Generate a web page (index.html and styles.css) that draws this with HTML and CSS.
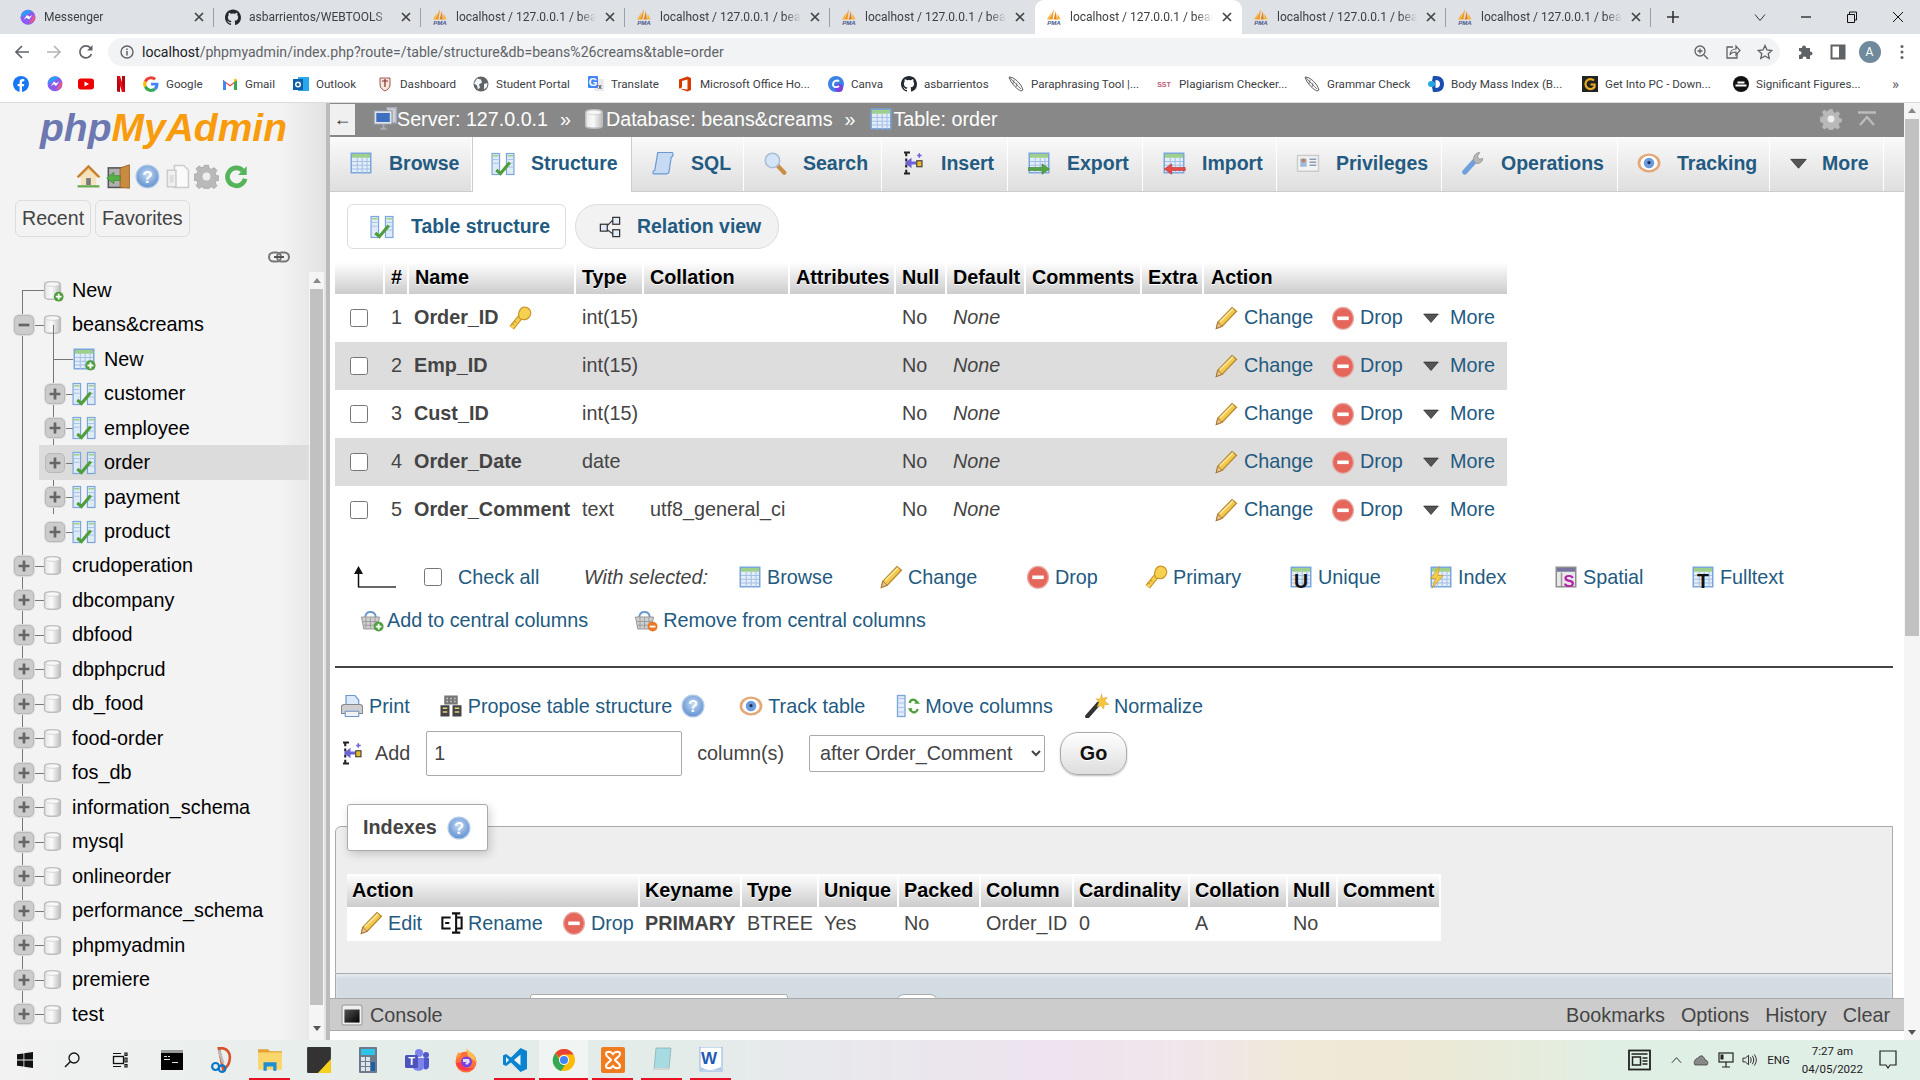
FILE: index.html
```html
<!DOCTYPE html>
<html lang="en">
<head>
<meta charset="utf-8">
<title>localhost / 127.0.0.1 / beans&amp;creams / order | phpMyAdmin</title>
<link rel="stylesheet" href="styles.css">
</head>
<body>
<svg class="sprite" xmlns="http://www.w3.org/2000/svg" width="0" height="0">
<defs>
<linearGradient id="gdb" x1="0" x2="1" y1="0" y2="0"><stop offset="0" stop-color="#e6e6e6"/><stop offset=".45" stop-color="#fafafa"/><stop offset="1" stop-color="#bdbdbd"/></linearGradient>
<linearGradient id="gcon" x1="0" x2="1" y1="0" y2="1"><stop offset="0" stop-color="#555"/><stop offset="1" stop-color="#000"/></linearGradient>
<radialGradient id="ghelp" cx=".5" cy=".4" r=".6"><stop offset="0" stop-color="#c5d9f3"/><stop offset="1" stop-color="#5d90d0"/></radialGradient>
<symbol id="db" viewBox="0 0 16 16"><path d="M2.500 3.500C2.500 1.300 13.500 1.300 13.500 3.500V12.500C13.500 14.700 2.500 14.700 2.500 12.500Z" fill="url(#gdb)" stroke="#bdbdbd"/><ellipse cx="8" cy="3.600" rx="4.800" ry="1.500" fill="#f7f7f7" stroke="#ccc" stroke-width=".5"/></symbol>
<symbol id="dbnew" viewBox="0 0 16 16"><use href="#db"/><circle cx="12.300" cy="12.300" r="3.400" fill="#4f9e3d"/><path d="M10.300 12.300h4M12.300 10.300v4" stroke="#fff" stroke-width="1.300"/></symbol>
<symbol id="tbl" viewBox="0 0 16 16"><rect x="1.500" y="1.500" width="13" height="13" fill="#e3edf9" stroke="#7ba6dc"/><rect x="2" y="2" width="12" height="2.500" fill="#9ed08c"/><path d="M2 7h12M2 9.500h12M2 12h12M5.500 4.500v10M8.800 4.500v10M12 4.500v10" stroke="#a5c0e4" stroke-width=".7"/></symbol>
<symbol id="tblnew" viewBox="0 0 16 16"><use href="#tbl"/><circle cx="12.300" cy="12.300" r="3.400" fill="#4f9e3d"/><path d="M10.300 12.300h4M12.300 10.300v4" stroke="#fff" stroke-width="1.300"/></symbol>
<symbol id="struct" viewBox="0 0 16 16"><rect x=".7" y="1" width="5" height="14" fill="#dfeaf7" stroke="#7ba6dc" stroke-width=".8"/><rect x="10.300" y="1" width="5" height="14" fill="#dfeaf7" stroke="#7ba6dc" stroke-width=".8"/><path d="M1 2.500h4M11 2.500h4" stroke="#9ed08c"/><path d="M1 5h4M1 7.500h4M11 5h4M11 7.500h4M11 10h4" stroke="#a5c0e4" stroke-width=".6"/><path d="M3.500 12L6.300 14.300 12.500 7" fill="none" stroke="#4f9e3d" stroke-width="2.100"/></symbol>
<symbol id="server" viewBox="0 0 16 16"><path d="M9 .5h6.500v10H13" fill="#cfd3d8" stroke="#aab"/><rect x=".7" y="2.500" width="12" height="9" fill="#dfe3e8" stroke="#8a93a0" stroke-width=".7"/><rect x="2.200" y="4" width="9" height="6" fill="#3f6fc0"/><path d="M5 14.500h4M7 11.500v3" stroke="#aab" stroke-width="1.300"/></symbol>
<symbol id="relv" viewBox="0 0 16 16"><rect x="10" y="1" width="5" height="5" fill="#e3edf9" stroke="#333" stroke-width=".9"/><rect x="10" y="10" width="5" height="5" fill="#e3edf9" stroke="#333" stroke-width=".9"/><rect x="1" y="6" width="5" height="5" fill="#e3edf9" stroke="#333" stroke-width=".9"/><path d="M6 7L10 3M6 10l4 3" stroke="#333" stroke-width=".9"/></symbol>
<symbol id="sql" viewBox="0 0 16 16"><path d="M4.500 1H14c1 0 1 3-.5 3L12 14c-.2 1-1 1.300-2 1.300H2C1 15.300 1 13 2.500 13Z" fill="#c6daf3" stroke="#6b98d0" stroke-width=".8"/></symbol>
<symbol id="search" viewBox="0 0 16 16"><path d="M9.800 9.800L14.200 14.500" stroke="#c98f45" stroke-width="2.800" stroke-linecap="round"/><circle cx="6.300" cy="6.300" r="4.800" fill="#d4e5f8" stroke="#a9bdd3"/></symbol>
<symbol id="insert" viewBox="0 0 16 16"><path d="M2 1h4M2 15h4M3.500 1v2.500M3.500 5v2M3.500 9v2M3.500 12.500v2.500" stroke="#222" stroke-width="1.400"/><path d="M2.500 8L7 4.500V7h3v2H7v2.500Z" fill="#6a62d6"/><rect x="10.500" y="6.500" width="3.500" height="4" fill="#e8b92c" stroke="#333" stroke-width=".7"/><path d="M12.200 1.500v3M10.800 3h3" stroke="#6a62d6"/></symbol>
<symbol id="export" viewBox="0 0 16 16"><use href="#tbl"/><path d="M1 11h9V8.500l5 3.500-5 3.500V13H1Z" fill="#55a545" stroke="#3e7f33" stroke-width=".4"/></symbol>
<symbol id="import" viewBox="0 0 16 16"><use href="#tbl"/><path d="M15.500 11h-9V8.500l-5 3.500 5 3.500V13h9Z" fill="#e84a4a" stroke="#b73030" stroke-width=".4"/></symbol>
<symbol id="priv" viewBox="0 0 16 16"><rect x="1" y="3" width="14" height="10.500" fill="#f3f3f3" stroke="#ccc"/><rect x="2.800" y="5" width="4.300" height="5.500" fill="#9db9dd"/><circle cx="5" cy="6.300" r="1.300" fill="#c57f4c"/><path d="M9 5.500h4.500M9 7.500h4.500M9 9.500h4.500" stroke="#8b9cb5"/></symbol>
<symbol id="oper" viewBox="0 0 16 16"><path d="M2.500 14L9 6.800" stroke="#6f9fdd" stroke-width="3.400" stroke-linecap="round"/><path d="M8.500 6.500C7.800 3.500 9.800 1 12.500 1L11 3.500 12 5.500 14.500 5C14.500 7.500 11.500 9 9.500 8Z" fill="#b6b6b6" stroke="#8c8c8c" stroke-width=".5"/></symbol>
<symbol id="eye" viewBox="0 0 16 16"><ellipse cx="8" cy="8" rx="7.600" ry="6.400" fill="#e4a877"/><ellipse cx="8" cy="8" rx="5.800" ry="4.800" fill="#fff"/><circle cx="8" cy="8" r="3.500" fill="#6b9bdc"/><circle cx="8" cy="7.700" r="1.100" fill="#1e2f55"/></symbol>
<symbol id="tri" viewBox="0 0 16 16"><path d="M1.500 4.500h13L8 12Z" fill="#555" stroke="#222" stroke-width=".6"/></symbol>
<symbol id="pencil" viewBox="0 0 16 16"><path d="M12 1l3 2.500-9.500 10L1.500 15l1-4.200Z" fill="#f2c94c" stroke="#b9862a" stroke-width=".8"/><path d="M2.500 10.800l3 2.700L1.500 15Z" fill="#e6bf94" stroke="#9a6c2a" stroke-width=".5"/><path d="M4 10.500l8.700-8.700" stroke="#fbe9a3"/></symbol>
<symbol id="drop" viewBox="0 0 16 16"><ellipse cx="8" cy="8.200" rx="7" ry="7.300" fill="#e5675c" stroke="#e8aaa5" stroke-width=".8"/><rect x="4.200" y="7" width="7.600" height="2.400" fill="#fff"/></symbol>
<symbol id="key" viewBox="0 0 16 16"><path d="M2.500 14.500L8.500 7" stroke="#c9972d" stroke-width="3.800"/><path d="M2.500 14.500L8.500 7" stroke="#f6d04f" stroke-width="2.300"/><path d="M2.500 11.500l1.500 1M4 10l1.500 1" stroke="#c9972d"/><path d="M10.500 .8C13.200 .5 15.800 2.700 15 5.700 14 9 10.500 10 7.800 8.300 6 5.500 7.800 1.300 10.500 .8Z" fill="#f6d04f" stroke="#c9972d" stroke-width=".8"/></symbol>
<symbol id="uniq" viewBox="0 0 16 16"><use href="#tbl"/><text x="8" y="15" text-anchor="middle" class="svgt" font-size="13">U</text></symbol>
<symbol id="idx" viewBox="0 0 16 16"><use href="#tbl"/><path d="M7 1L1 9h3.500L2 15.500 9.500 7H6Z" fill="#f3cd4a" stroke="#c7982b" stroke-width=".5"/></symbol>
<symbol id="spat" viewBox="0 0 16 16"><rect x="1.500" y="1.500" width="13" height="13" fill="#e9e9e9" stroke="#8d8d8d"/><rect x="2" y="2" width="12" height="2.500" fill="#77759c"/><path d="M5 5v9" stroke="#999"/><text x="10" y="14.500" text-anchor="middle" class="svgs" font-size="11">S</text></symbol>
<symbol id="full" viewBox="0 0 16 16"><use href="#tbl"/><text x="8" y="15" text-anchor="middle" class="svgt" font-size="13">T</text></symbol>
<symbol id="cadd" viewBox="0 0 16 16"><path d="M3.500 6C4 1.500 10 1.500 10.500 6" fill="none" stroke="#6d98cc" stroke-width="1.300"/><path d="M1 6h12l-1.500 8h-9Z" fill="#cfcfcf" stroke="#8f8f8f" stroke-width=".6"/><path d="M4 6.500v7M7 6.500v7M10 6.500v7M2 9h10M2.500 11.500h9" stroke="#8f8f8f" stroke-width=".5"/><circle cx="12.400" cy="12.400" r="3.300" fill="#4f9e3d"/><path d="M10.500 12.400h3.800M12.400 10.500v3.800" stroke="#fff" stroke-width="1.200"/></symbol>
<symbol id="crem" viewBox="0 0 16 16"><path d="M3.500 6C4 1.500 10 1.500 10.500 6" fill="none" stroke="#6d98cc" stroke-width="1.300"/><path d="M1 6h12l-1.500 8h-9Z" fill="#cfcfcf" stroke="#8f8f8f" stroke-width=".6"/><path d="M4 6.500v7M7 6.500v7M10 6.500v7M2 9h10M2.500 11.500h9" stroke="#8f8f8f" stroke-width=".5"/><circle cx="12.400" cy="12.400" r="3.300" fill="#e8792b"/><path d="M10.500 12.400h3.800" stroke="#fff" stroke-width="1.200"/></symbol>
<symbol id="print" viewBox="0 0 16 16"><path d="M4 1h6l2.500 3v4h-8.500Z" fill="#dce9f8" stroke="#6d98cc" stroke-width=".8"/><path d="M1 8.500C1 7.500 2 7 3 7h10c1 0 2 .5 2 1.500V13H1Z" fill="#cfcfcf" stroke="#888" stroke-width=".7"/><rect x="3.500" y="11.500" width="9" height="3.500" fill="#f2f2f2" stroke="#6d98cc" stroke-width=".7"/></symbol>
<symbol id="prop" viewBox="0 0 16 16"><rect x="3.500" y="1" width="9" height="6" fill="#777"/><path d="M5 3h1M7.500 3h1M10 3h1M5 5h1M7.500 5h1M10 5h1" stroke="#ccc"/><rect x="1" y="7.500" width="6" height="7.500" fill="#444"/><rect x="9" y="7.500" width="6" height="7.500" fill="#444"/><path d="M2.500 9.500h3M2.500 12h3M10.500 9.500h3M10.500 12h3" stroke="#e6d27a"/></symbol>
<symbol id="help" viewBox="0 0 16 16"><circle cx="8" cy="8" r="7.300" fill="url(#ghelp)" stroke="#b4cbe8" stroke-width=".8"/><text x="8" y="12" text-anchor="middle" class="svgw" font-size="11">?</text></symbol>
<symbol id="move" viewBox="0 0 16 16"><rect x="1" y="1" width="5" height="14" fill="#e3edf9" stroke="#7ba6dc" stroke-width=".9"/><path d="M1.500 3h4M1.500 6h4M1.500 9h4M1.500 12h4" stroke="#a5c0e4" stroke-width=".6"/><path d="M9 6C10 3 13 3 14 6M14.500 10c-1 3-4 3-5 0" fill="none" stroke="#4f9e3d" stroke-width="1.500"/><path d="M12 6.500h4L14.500 4.500ZM8 9.500h3L9.500 12Z" fill="#4f9e3d"/></symbol>
<symbol id="wand" viewBox="0 0 16 16"><path d="M1.500 15L9 6.500" stroke="#333" stroke-width="2.800" stroke-linecap="round"/><path d="M11 0l.8 3 3-1-1.600 2.800L16 7l-3.200.2L12.500 10l-1.800-2.200L8 8.500l1.300-2.800L7.500 3.200l2.700.2Z" fill="#f5c73d" stroke="#d49a1e" stroke-width=".3"/></symbol>
<symbol id="rename" viewBox="0 0 16 16"><path d="M7 4H1v8h6" fill="#fff" stroke="#111" stroke-width="1.500"/><path d="M3 8h3" stroke="#111" stroke-width="1.500"/><path d="M8 1h6M8 15h6M11 1v14M11 4h4v8h-4" fill="none" stroke="#111" stroke-width="1.500"/></symbol>
<symbol id="console" viewBox="0 0 16 16"><rect x=".7" y=".7" width="14.600" height="14.600" rx="1.500" fill="#efefef" stroke="#aaa"/><rect x="2.500" y="4" width="11" height="9.500" fill="url(#gcon)"/></symbol>
<symbol id="home" viewBox="0 0 16 16"><path d="M1 8.500L8 1.500l7 7" fill="#f1c27a" stroke="#c47e2f" stroke-width="1.400"/><path d="M3 8l5-4.500L13 8v5.500H3Z" fill="#f5e2bf"/><rect x="6.500" y="9" width="3" height="4.500" fill="#7a7a7a"/><path d="M1 14.300h14" stroke="#66a84a" stroke-width="1.400"/></symbol>
<symbol id="exit" viewBox="0 0 16 16"><rect x="1.500" y="2.500" width="9" height="12.500" fill="#b0b0b0" stroke="#555"/><path d="M9 2.500L15 .5V15.500L9 15Z" fill="#c98a42" stroke="#91591e" stroke-width=".5"/><path d="M.5 9L5 5.300V7.500H9v3H5v2.200Z" fill="#56b044" stroke="#367d2a" stroke-width=".4"/></symbol>
<symbol id="doc" viewBox="0 0 16 16"><path d="M6 1h6l3 3v11H6Z" fill="#fafafa" stroke="#ccc"/><path d="M1.500 4H7v10.500H1.500Z" fill="#f1f1f1" stroke="#ccc"/><path d="M3 7h2.500v5H3Z" fill="#ddd"/></symbol>
<symbol id="gear" viewBox="0 0 16 16"><path d="M6.700 .8h2.600l.4 2 1.400.6 1.800-1.100 1.800 1.800-1.100 1.800.6 1.400 2 .4v2.600l-2 .4-.6 1.400 1.100 1.800-1.800 1.800-1.800-1.100-1.400.6-.4 2H6.700l-.4-2-1.400-.6-1.800 1.100-1.800-1.800 1.100-1.800-.6-1.400-2-.4V6.600l2-.4.6-1.400L1.300 3l1.800-1.800 1.800 1.100 1.400-.6Z" fill="#b9b9b9" stroke="#9a9a9a" stroke-width=".4"/><circle cx="8" cy="8" r="2.500" fill="#eee"/></symbol>
<symbol id="reload" viewBox="0 0 16 16"><path d="M13.500 9.500A5.700 5.700 0 1 1 12 4.200" fill="none" stroke="#55b45a" stroke-width="3"/><path d="M14.500 1.500V7H9Z" fill="#55b45a"/></symbol>
<symbol id="link" viewBox="0 0 22 12"><rect x="1" y="1.500" width="12" height="9" rx="4.500" fill="none" stroke="#777" stroke-width="2"/><rect x="9" y="1.500" width="12" height="9" rx="4.500" fill="none" stroke="#777" stroke-width="2"/><path d="M6 6h10" stroke="#555" stroke-width="2"/></symbol>
<symbol id="plus" viewBox="0 0 20 20"><path d="M4 10h12M10 4v12" stroke="#666" stroke-width="3"/></symbol>
<symbol id="minus" viewBox="0 0 20 20"><path d="M4 10h12" stroke="#666" stroke-width="3"/></symbol>
<symbol id="selarrow" viewBox="0 0 42 24"><path d="M4 22h38" stroke="#333" stroke-width="1.500"/><path d="M4.500 22V7" stroke="#111" stroke-width="1.500"/><path d="M0 9L4.500 1 9 9Z" fill="#111"/></symbol>
<symbol id="pma" viewBox="0 0 16 18"><path d="M3 11L8 0 6.500 11Z" fill="#f29a1c"/><path d="M7.500 11L10 2 11 11Z" fill="#e5831a"/><path d="M.5 11L5 4 3.500 11ZM11 11L12 5 15 11Z" fill="#f6b445"/><text x="8" y="17" text-anchor="middle" class="svgp" font-size="6.500">PMA</text></symbol>
<symbol id="gh" viewBox="0 0 16 16"><path fill="#24292f" d="M8 0C3.580 0 0 3.580 0 8c0 3.540 2.290 6.530 5.470 7.590.4.070.55-.17.55-.38v-1.340c-2.230.48-2.700-1.070-2.700-1.070-.36-.92-.89-1.170-.89-1.170-.73-.5.050-.49.050-.49.800.06 1.220.82 1.220.82.720 1.220 1.870.87 2.330.66.070-.52.280-.87.510-1.070-1.780-.2-3.640-.89-3.640-3.950 0-.87.310-1.590.820-2.150-.08-.2-.36-1.020.08-2.120 0 0 .67-.21 2.200.82a7.600 7.600 0 0 1 4 0c1.530-1.040 2.200-.82 2.200-.82.440 1.100.16 1.920.08 2.120.51.560.82 1.270.82 2.150 0 3.070-1.870 3.750-3.650 3.950.290.250.540.730.540 1.480v2.190c0 .210.150.460.550.380A8 8 0 0 0 16 8c0-4.420-3.580-8-8-8Z"/></symbol>
<symbol id="msg" viewBox="0 0 16 16"><circle cx="8" cy="7.700" r="7.500" fill="#8a5cf0"/><path d="M1 8A7.400 7.400 0 0 1 8 .4c2 0 3 .6 4 1.500Z" fill="#2a9df4"/><path d="M9 14a7 7 0 0 0 6-6l-1-3Z" fill="#f0567f"/><path d="M3.700 10L7 5.500l2.300 1.800L12.300 5.500 9 10 6.700 8.200Z" fill="#fff"/></symbol>
<symbol id="x" viewBox="0 0 12 12"><path d="M2 2l8 8M10 2l-8 8" stroke="#444" stroke-width="1.700"/></symbol>
<symbol id="fb" viewBox="0 0 16 16"><circle cx="8" cy="8" r="8" fill="#1877f2"/><path d="M10.900 10.300l.4-2.300H9V6.500c0-.7.300-1.300 1.300-1.300h1V3.200S10.400 3 9.600 3C7.800 3 6.600 4.100 6.600 6.100V8H4.600v2.300h2V16h2.400v-5.700Z" fill="#fff"/></symbol>
<symbol id="yt" viewBox="0 0 16 16"><rect x="0" y="2.500" width="16" height="11" rx="3" fill="#e00"/><path d="M6.500 5.500L11 8l-4.500 2.500Z" fill="#fff"/></symbol>
<symbol id="nf" viewBox="0 0 10 16"><path d="M1 0h3v16L1 15.500ZM6 0h3v16L6 15.500Z" fill="#b20710"/><path d="M1 0h3l5 16H6Z" fill="#e50914"/></symbol>
<symbol id="goog" viewBox="0 0 16 16"><path d="M15.500 8.200c0-.6 0-1-.1-1.500H8v2.900h4.300c-.2 1-.7 1.800-1.600 2.400l2.500 2c1.500-1.300 2.300-3.400 2.300-5.800Z" fill="#4285f4"/><path d="M8 16c2.100 0 3.900-.7 5.200-1.900l-2.500-2c-.7.500-1.600.8-2.700.8-2.100 0-3.800-1.400-4.400-3.300L1 11.600C2.300 14.200 5 16 8 16Z" fill="#34a853"/><path d="M3.600 9.600a4.800 4.800 0 0 1 0-3.200L1 4.400a8 8 0 0 0 0 7.200Z" fill="#fbbc05"/><path d="M8 3.200c1.200 0 2.200.4 3 1.200l2.200-2.200A8 8 0 0 0 1 4.400l2.600 2C4.200 4.500 5.900 3.200 8 3.200Z" fill="#ea4335"/></symbol>
<symbol id="gm" viewBox="0 0 16 16"><path d="M1 14V4l7 5 7-5v10h-3V7.500L8 10.500 4 7.500V14Z" fill="#ea4335"/><path d="M1 14V4l3 2.300V14Z" fill="#4285f4"/><path d="M12 14V6.300L15 4v10Z" fill="#34a853"/><path d="M12 6.300L15 4l-1.500-1.500L12 3.500Z" fill="#fbbc05"/></symbol>
<symbol id="ol" viewBox="0 0 16 16"><rect x="5" y="1" width="11" height="14" fill="#28a8ea"/><rect x="0" y="3" width="10" height="11" fill="#0f5ea8"/><circle cx="5" cy="8.500" r="2.300" fill="none" stroke="#fff" stroke-width="1.400"/></symbol>
<symbol id="crest" viewBox="0 0 16 16"><path d="M3 2h10v7c0 3-3 5-5 6-2-1-5-3-5-6Z" fill="#f3e9dc" stroke="#8a2c2c" stroke-width=".8"/><path d="M5 5h6M8 3v8" stroke="#8a2c2c" stroke-width="1.200"/></symbol>
<symbol id="globe" viewBox="0 0 16 16"><circle cx="8" cy="8" r="7.500" fill="#5f6368"/><path d="M4 2.500l4 1 1 3-3 2 1 3-2 2-1-4-3-2ZM11 8l3.500-1-.5 4-3 2.500Z" fill="#f1f3f4"/></symbol>
<symbol id="gt" viewBox="0 0 16 16"><rect x="6" y="3" width="10" height="12" rx="1" fill="#e8eaed"/><rect x="0" y="0" width="10" height="12" rx="1" fill="#4285f4"/><text x="5" y="9.500" text-anchor="middle" class="svgw" font-size="9">G</text><text x="12" y="13" text-anchor="middle" class="svgd" font-size="7">x</text></symbol>
<symbol id="off" viewBox="0 0 16 16"><path d="M2 3.500L10.500.5l3.500 1.500v12l-3.500 1.500L2 12.500l8.500 1V3.500L5 5v6.500L2 12.500Z" fill="#d83b01"/></symbol>
<symbol id="canva" viewBox="0 0 16 16"><circle cx="8" cy="8" r="8" fill="#3b82e6"/><circle cx="11" cy="12" r="4" fill="#7d3fe0"/><path d="M11 5.500C9.500 3.500 5 5 5 8.500c0 3 4 3.500 6 1.500" fill="none" stroke="#fff" stroke-width="1.800"/></symbol>
<symbol id="quill" viewBox="0 0 16 16"><path d="M1 1c5 0 12 6 14 13l-2 1C10 14 3 8 1 1Z" fill="#f4f4f4" stroke="#555" stroke-width=".9"/><path d="M2 2l11 11M6 4L5 8M9 7l-1 4" stroke="#555" stroke-width=".7"/></symbol>
<symbol id="sst" viewBox="0 0 16 16"><text x="8" y="11" text-anchor="middle" class="svgr" font-size="7">SST</text></symbol>
<symbol id="dd" viewBox="0 0 16 16"><path d="M5 0h3c5 0 8 3 8 8s-3 8-8 8H5l-1-5 3-3-3-3Z" fill="#1a4fb0"/><path d="M7.500 4c3 0 4.500 1.500 4.500 4s-1.500 4-4.500 4Z" fill="#fff"/><ellipse cx="3.500" cy="8" rx="3.500" ry="3" fill="#22a7e0"/></symbol>
<symbol id="gy" viewBox="0 0 16 16"><rect width="16" height="16" fill="#222"/><path d="M12 4.500A5 5 0 1 0 12.500 11V8.500h-4" fill="none" stroke="#e6ab23" stroke-width="2.200"/></symbol>
<symbol id="sig" viewBox="0 0 16 16"><circle cx="8" cy="8" r="8" fill="#111"/><path d="M4.500 6.500h7M2.500 9.500h11" stroke="#fff" stroke-width="2"/></symbol>
<symbol id="win" viewBox="0 0 16 16"><path d="M0 2.300l6.500-.9v6.200H0ZM7.300 1.300L16 0v7.600H7.300ZM0 8.400h6.500v6.200L0 13.700ZM7.300 8.400H16V16L7.300 14.800Z" fill="#111"/></symbol>
<symbol id="mag" viewBox="0 0 16 16"><circle cx="10" cy="6" r="5" fill="none" stroke="#111" stroke-width="1.300"/><path d="M6.500 9.500L1 15" stroke="#111" stroke-width="1.500"/></symbol>
<symbol id="tv" viewBox="0 0 16 16"><rect x="1.500" y="4.500" width="10" height="7" fill="none" stroke="#111" stroke-width="1.300"/><path d="M1 1.500h8M1 14.500h8M13 1h2v2.500h-2ZM13 6h2v4h-2ZM13 12.500h2V15h-2Z" fill="none" stroke="#111" stroke-width="1.200"/></symbol>
<symbol id="cmd" viewBox="0 0 22 20"><rect width="22" height="20" fill="#000"/><rect width="22" height="3" fill="#999"/><path d="M3 6h3v1H3ZM7 6h2v1H7ZM3 9h6v1H3ZM11 12h6v1h-6Z" fill="#ddd"/></symbol>
<symbol id="snip" viewBox="0 0 20 24"><path d="M10 1c6 0 9 5 8 11s-6 9-6 9L8 1Z" fill="none" stroke="#d4532b" stroke-width="2.400"/><path d="M8 3l4 12" stroke="#bbb" stroke-width="2.400"/><circle cx="5" cy="18" r="3.200" fill="none" stroke="#0a76c8" stroke-width="2"/><circle cx="11" cy="20" r="3" fill="none" stroke="#0a76c8" stroke-width="2"/></symbol>
<symbol id="folder" viewBox="0 0 22 24"><path d="M0 2h9l2 2h11v3H0Z" fill="#e1a232"/><rect y="5" width="22" height="16" fill="#fbd66d"/><path d="M5 22v-8h12v8h-3v-4H8v4Z" fill="#1a8fd6"/></symbol>
<symbol id="sticky" viewBox="0 0 22 24"><rect width="22" height="24" rx="1" fill="#333"/><path d="M22 11v13H10Z" fill="#f7d21c"/></symbol>
<symbol id="calc" viewBox="0 0 18 26"><rect width="18" height="26" rx="1" fill="#6c7a89"/><rect x="2" y="2" width="14" height="6" fill="#2cc4e8"/><path d="M2 10h4v4H2ZM7 10h4v4H7ZM2 15h4v4H2ZM7 15h4v4H7ZM2 20h4v4H2ZM7 20h4v4H7Z" fill="#dbe4ea"/><rect x="12" y="15" width="4" height="9" fill="#1a5fa8"/></symbol>
<symbol id="teams" viewBox="0 0 24 24"><circle cx="14" cy="5" r="4" fill="#7b83eb"/><circle cx="21" cy="7" r="3" fill="#5059c9"/><path d="M17 10h7v8c0 3-3 4-5 3Z" fill="#5059c9"/><path d="M8 10h11v9c0 5-11 5-11 0Z" fill="#7b83eb"/><rect x="0" y="7" width="13" height="13" rx="1.500" fill="#4b53bc"/><text x="6.500" y="17" text-anchor="middle" class="svgw" font-size="11">T</text></symbol>
<symbol id="ff" viewBox="0 0 24 24"><circle cx="12" cy="14" r="10.500" fill="#ff7139"/><path d="M12 0c3 4 10 6 10 14L14 8Z" fill="#ffbd4f"/><path d="M2 11c0-4 2-6 3-7l2 4Z" fill="#ff9640"/><circle cx="12.500" cy="14" r="5.500" fill="#7542e5"/><path d="M9 11h6l1 3-3 3-2-2 2-1H9Z" fill="#fff" opacity=".8"/><path d="M2 15c1 7 12 11 18 4-5 3-12 1-13-5Z" fill="#ff3750"/></symbol>
<symbol id="vsc" viewBox="0 0 24 24"><path d="M17.500 0L24 3v18l-6.500 3L8 14.500 3 18l-3-1.500v-9L3 6l5 3.500Z" fill="#0a84d0"/><path d="M17.500 6.500L11 12l6.500 5.500Z" fill="#f1f4f2"/><path d="M3 9v6l3-3Z" fill="#f1f4f2"/></symbol>
<symbol id="chr" viewBox="0 0 24 24"><circle cx="12" cy="12" r="11" fill="#fbbc05"/><path d="M12 1a11 11 0 0 1 9.500 5.500H12a5.500 5.500 0 0 0-5 3L3.500 5A11 11 0 0 1 12 1Z" fill="#ea4335"/><path d="M3.500 5L8 12.500a5 5 0 0 0 5 4.500L9 23A11 11 0 0 1 3.500 5Z" fill="#34a853"/><circle cx="12" cy="12" r="5" fill="#fff"/><circle cx="12" cy="12" r="4" fill="#4285f4"/></symbol>
<symbol id="xam" viewBox="0 0 24 26"><rect width="24" height="26" rx="2" fill="#f07c20"/><path d="M5 7c0-3 5-3 7 0 2-3 7-3 7 0 0 3-4 4-5 6 1 2 5 3 5 6 0 3-5 3-7 0-2 3-7 3-7 0 0-3 4-4 5-6-1-2-5-3-5-6Z" fill="none" stroke="#fff" stroke-width="2"/></symbol>
<symbol id="note" viewBox="0 0 24 26"><path d="M6 1h15l-2 21H4Z" fill="#a6dbe2" stroke="#8aa" stroke-width=".7"/><path d="M2 23h16l2-2H4Z" fill="#d5d5d5"/></symbol>
<symbol id="word" viewBox="0 0 24 26"><rect x="1" y="0" width="22" height="24" fill="#fff" stroke="#8fb3e0"/><text x="10" y="17" text-anchor="middle" class="svgb" font-size="17">W</text><path d="M2 20c5 4 12 4 20 0v3H2Z" fill="#a8c5ec"/></symbol>
<symbol id="news" viewBox="0 0 24 24"><rect x="1.500" y="2.500" width="21" height="19" fill="none" stroke="#222" stroke-width="1.800"/><rect x="5" y="9" width="8" height="8" fill="none" stroke="#222" stroke-width="1.500"/><path d="M4 6h16M15 10h5M15 13h5M15 16h5" stroke="#222" stroke-width="1.500"/></symbol>
<symbol id="cloud" viewBox="0 0 16 14"><path d="M2 12h12c2-3 0-5-2-5C11 3 8 1 5 5 2 6 0 9 2 12Z" fill="#888" stroke="#333" stroke-width=".7"/></symbol>
<symbol id="net" viewBox="0 0 16 16"><rect x="1" y="1" width="14" height="9" fill="none" stroke="#222" stroke-width="1.200"/><path d="M8 10v5M4 15h8" stroke="#222" stroke-width="1.200"/><rect x="2.500" y="2.500" width="3" height="5" fill="#222"/></symbol>
<symbol id="snd" viewBox="0 0 16 16"><path d="M1 6h2.500L7 3v10L3.500 10H1Z" fill="none" stroke="#222"/><path d="M9 5c1 2 1 4 0 6M11 3.500c2 3 2 6 0 9M13 2c3 4 3 8 0 12" fill="none" stroke="#222"/></symbol>
<symbol id="bubble" viewBox="0 0 18 20"><path d="M1 1h16v14h-6l-2 3-2-3H1Z" fill="none" stroke="#222" stroke-width="1.200"/></symbol>
</defs>
</svg>

<div class="tabstrip">
  <div class="ctab first sep"><svg class="fav"><use href="#msg"/></svg><span class="tlabel">Messenger</span><svg class="close"><use href="#x"/></svg></div>
  <div class="ctab sep"><svg class="fav"><use href="#gh"/></svg><span class="tlabel">asbarrientos/WEBTOOLS</span><svg class="close"><use href="#x"/></svg></div>
  <div class="ctab sep"><svg class="fav"><use href="#pma"/></svg><span class="tlabel">localhost / 127.0.0.1 / bean</span><svg class="close"><use href="#x"/></svg></div>
  <div class="ctab sep"><svg class="fav"><use href="#pma"/></svg><span class="tlabel">localhost / 127.0.0.1 / bean</span><svg class="close"><use href="#x"/></svg></div>
  <div class="ctab"><svg class="fav"><use href="#pma"/></svg><span class="tlabel">localhost / 127.0.0.1 / bean</span><svg class="close"><use href="#x"/></svg></div>
  <div class="ctab active"><svg class="fav"><use href="#pma"/></svg><span class="tlabel">localhost / 127.0.0.1 / bean</span><svg class="close"><use href="#x"/></svg></div>
  <div class="ctab sep"><svg class="fav"><use href="#pma"/></svg><span class="tlabel">localhost / 127.0.0.1 / bean</span><svg class="close"><use href="#x"/></svg></div>
  <div class="ctab sep"><svg class="fav"><use href="#pma"/></svg><span class="tlabel">localhost / 127.0.0.1 / bean</span><svg class="close"><use href="#x"/></svg></div>
  <div class="newtab"><svg viewBox="0 0 12 12" class="plusnew"><path d="M6 0v12M0 6h12" stroke="#333" stroke-width="1.600"/></svg></div>
  <div class="winctl">
    <svg viewBox="0 0 12 12" class="wc"><path d="M1 3.500l5 6 5-6" fill="none" stroke="#333"/></svg>
    <svg viewBox="0 0 12 12" class="wc"><path d="M1 6h10" stroke="#111" stroke-width="1.200"/></svg>
    <svg viewBox="0 0 12 12" class="wc"><path d="M1.500 3.500h7v8h-7ZM3.500 3.500V1h7v8H8.500" fill="none" stroke="#111"/></svg>
    <svg viewBox="0 0 12 12" class="wc"><path d="M1 1l10 10M11 1L1 11" stroke="#111"/></svg>
  </div>
</div>

<div class="toolbar">
  <svg viewBox="0 0 16 16" class="nav"><path d="M15 8H2M8 2L2 8l6 6" fill="none" stroke="#5f6368" stroke-width="1.700"/></svg>
  <svg viewBox="0 0 16 16" class="nav"><path d="M1 8h13M8 2l6 6-6 6" fill="none" stroke="#b3b5b8" stroke-width="1.700"/></svg>
  <svg viewBox="0 0 16 16" class="nav"><path d="M13.500 10A6 6 0 1 1 12.500 4" fill="none" stroke="#5f6368" stroke-width="1.700"/><path d="M14.500 1v5.500H9Z" fill="#5f6368"/></svg>
  <div class="omni">
    <svg viewBox="0 0 14 14" class="info"><circle cx="7" cy="7" r="6" fill="none" stroke="#5f6368" stroke-width="1.400"/><path d="M7 6v4.500M7 3.500v1.500" stroke="#5f6368" stroke-width="1.500"/></svg>
    <span class="url"><span class="host">localhost</span>/phpmyadmin/index.php?route=/table/structure&amp;db=beans%26creams&amp;table=order</span>
    <span class="omni-right">
      <svg viewBox="0 0 16 16" class="tb"><circle cx="7" cy="7" r="5" fill="none" stroke="#5f6368" stroke-width="1.300"/><path d="M11 11l4 4M7 4.500v5M4.500 7h5" stroke="#5f6368" stroke-width="1.300"/></svg>
      <svg viewBox="0 0 16 16" class="tb"><path d="M8 3H2v11h10V9" fill="none" stroke="#5f6368" stroke-width="1.300"/><path d="M5 11c0-4 3-6 6-6V2l4 4.500-4 4.500V8c-3 0-5 1-6 3Z" fill="none" stroke="#5f6368" stroke-width="1.200"/></svg>
      <svg viewBox="0 0 16 16" class="tb"><path d="M8 1.500l2 4.500 4.800.5-3.600 3.200 1 4.800L8 12l-4.200 2.500 1-4.800L1.200 6.500 6 6Z" fill="none" stroke="#5f6368" stroke-width="1.300"/></svg>
    </span>
  </div>
  <div class="tools">
    <svg viewBox="0 0 16 16" class="tb"><path d="M6 1.500c1.500 0 2 1 2 2.500h4v3.500c1.500 0 2.500.8 2.500 2s-1 2-2.500 2V15H8.500c0-1.500-.5-2.500-2-2.500s-2 1-2 2.500H1v-4c1.500 0 2.500-.7 2.500-2S2.500 7 1 7V4h3c0-1.500.5-2.500 2-2.500Z" fill="#5f6368"/></svg>
    <svg viewBox="0 0 16 16" class="tb"><rect x="1.500" y="1.500" width="13" height="13" fill="none" stroke="#5f6368" stroke-width="2"/><rect x="9" y="2" width="5" height="12" fill="#5f6368"/></svg>
    <span class="avatar">A</span>
    <svg viewBox="0 0 4 16" class="kebab"><circle cx="2" cy="2.500" r="1.500" fill="#5f6368"/><circle cx="2" cy="8" r="1.500" fill="#5f6368"/><circle cx="2" cy="13.500" r="1.500" fill="#5f6368"/></svg>
  </div>
</div>

<div class="bookmarks">
  <span class="bm"><svg class="bi"><use href="#fb"/></svg></span>
  <span class="bm"><svg class="bi"><use href="#msg"/></svg></span>
  <span class="bm"><svg class="bi"><use href="#yt"/></svg></span>
  <span class="bm"><svg class="bi"><use href="#nf"/></svg></span>
  <span class="bm"><svg class="bi"><use href="#goog"/></svg>Google</span>
  <span class="bm"><svg class="bi"><use href="#gm"/></svg>Gmail</span>
  <span class="bm"><svg class="bi"><use href="#ol"/></svg>Outlook</span>
  <span class="bm"><svg class="bi"><use href="#crest"/></svg>Dashboard</span>
  <span class="bm"><svg class="bi"><use href="#globe"/></svg>Student Portal</span>
  <span class="bm"><svg class="bi"><use href="#gt"/></svg>Translate</span>
  <span class="bm"><svg class="bi"><use href="#off"/></svg>Microsoft Office Ho...</span>
  <span class="bm"><svg class="bi"><use href="#canva"/></svg>Canva</span>
  <span class="bm"><svg class="bi"><use href="#gh"/></svg>asbarrientos</span>
  <span class="bm"><svg class="bi"><use href="#quill"/></svg>Paraphrasing Tool |...</span>
  <span class="bm"><svg class="bi"><use href="#sst"/></svg>Plagiarism Checker...</span>
  <span class="bm"><svg class="bi"><use href="#quill"/></svg>Grammar Check</span>
  <span class="bm"><svg class="bi"><use href="#dd"/></svg>Body Mass Index (B...</span>
  <span class="bm"><svg class="bi"><use href="#gy"/></svg>Get Into PC - Down...</span>
  <span class="bm"><svg class="bi"><use href="#sig"/></svg>Significant Figures...</span>
  <span class="bm more">»</span>
</div>

<div class="app">
  <aside class="side">
    <div class="logo"><span class="lphp">php</span><span class="lmy">MyAdmin</span></div>
    <div class="navicons">
      <svg class="ni"><use href="#home"/></svg><svg class="ni"><use href="#exit"/></svg><svg class="ni"><use href="#help"/></svg><svg class="ni"><use href="#doc"/></svg><svg class="ni"><use href="#gear"/></svg><svg class="ni"><use href="#reload"/></svg>
    </div>
    <div class="recents"><button class="rbtn">Recent</button><button class="rbtn">Favorites</button></div>
    <div class="linkrow"><svg class="linkic"><use href="#link"/></svg></div>
    <div class="treewrap">
      <ul class="tree">
        <li class="row leaf"><span class="noexp"></span><svg class="dbic"><use href="#dbnew"/></svg><span>New</span></li>
        <li class="row"><span class="exp"><svg><use href="#minus"/></svg></span><svg class="dbic"><use href="#db"/></svg><span>beans&amp;creams</span></li>
        <li class="sub">
          <ul class="subtree">
            <li class="row l2 leaf"><span class="noexp"></span><svg class="tbic"><use href="#tblnew"/></svg><span>New</span></li>
            <li class="row l2"><span class="exp"><svg><use href="#plus"/></svg></span><svg class="tbic"><use href="#struct"/></svg><span>customer</span></li>
            <li class="row l2"><span class="exp"><svg><use href="#plus"/></svg></span><svg class="tbic"><use href="#struct"/></svg><span>employee</span></li>
            <li class="row l2 cur"><span class="exp"><svg><use href="#plus"/></svg></span><svg class="tbic"><use href="#struct"/></svg><span>order</span></li>
            <li class="row l2"><span class="exp"><svg><use href="#plus"/></svg></span><svg class="tbic"><use href="#struct"/></svg><span>payment</span></li>
            <li class="row l2"><span class="exp"><svg><use href="#plus"/></svg></span><svg class="tbic"><use href="#struct"/></svg><span>product</span></li>
          </ul>
        </li>
        <li class="row"><span class="exp"><svg><use href="#plus"/></svg></span><svg class="dbic"><use href="#db"/></svg><span>crudoperation</span></li>
        <li class="row"><span class="exp"><svg><use href="#plus"/></svg></span><svg class="dbic"><use href="#db"/></svg><span>dbcompany</span></li>
        <li class="row"><span class="exp"><svg><use href="#plus"/></svg></span><svg class="dbic"><use href="#db"/></svg><span>dbfood</span></li>
        <li class="row"><span class="exp"><svg><use href="#plus"/></svg></span><svg class="dbic"><use href="#db"/></svg><span>dbphpcrud</span></li>
        <li class="row"><span class="exp"><svg><use href="#plus"/></svg></span><svg class="dbic"><use href="#db"/></svg><span>db_food</span></li>
        <li class="row"><span class="exp"><svg><use href="#plus"/></svg></span><svg class="dbic"><use href="#db"/></svg><span>food-order</span></li>
        <li class="row"><span class="exp"><svg><use href="#plus"/></svg></span><svg class="dbic"><use href="#db"/></svg><span>fos_db</span></li>
        <li class="row"><span class="exp"><svg><use href="#plus"/></svg></span><svg class="dbic"><use href="#db"/></svg><span>information_schema</span></li>
        <li class="row"><span class="exp"><svg><use href="#plus"/></svg></span><svg class="dbic"><use href="#db"/></svg><span>mysql</span></li>
        <li class="row"><span class="exp"><svg><use href="#plus"/></svg></span><svg class="dbic"><use href="#db"/></svg><span>onlineorder</span></li>
        <li class="row"><span class="exp"><svg><use href="#plus"/></svg></span><svg class="dbic"><use href="#db"/></svg><span>performance_schema</span></li>
        <li class="row"><span class="exp"><svg><use href="#plus"/></svg></span><svg class="dbic"><use href="#db"/></svg><span>phpmyadmin</span></li>
        <li class="row"><span class="exp"><svg><use href="#plus"/></svg></span><svg class="dbic"><use href="#db"/></svg><span>premiere</span></li>
        <li class="row"><span class="exp"><svg><use href="#plus"/></svg></span><svg class="dbic"><use href="#db"/></svg><span>test</span></li>
      </ul>
      <div class="sscroll"><span class="arr up"></span><span class="sthumb"></span><span class="arr down"></span></div>
    </div>
  </aside>
  <div class="splitter"></div>
  <div class="mainwrap">
    <main class="mainin">
      <div class="crumbs">
        <span class="back">←</span>
        <svg class="ci ci1"><use href="#server"/></svg><span class="ct">Server: 127.0.0.1</span><span class="raq">»</span>
        <svg class="ci ci2"><use href="#db"/></svg><span class="ct">Database: beans&amp;creams</span><span class="raq">»</span>
        <svg class="ci ci3"><use href="#tbl"/></svg><span class="ct">Table: order</span>
        <span class="cright"><svg class="cgear"><use href="#gear"/></svg><svg viewBox="0 0 18 16" class="ccol"><path d="M0 1.500h18M2 14l7-8 7 8" fill="none" stroke="#bbb" stroke-width="2.400"/></svg></span>
      </div>
      <nav class="tabs">
        <a class="tab"><svg class="ti"><use href="#tbl"/></svg>Browse</a>
        <a class="tab on"><svg class="ti"><use href="#struct"/></svg>Structure</a>
        <a class="tab"><svg class="ti"><use href="#sql"/></svg>SQL</a>
        <a class="tab"><svg class="ti"><use href="#search"/></svg>Search</a>
        <a class="tab"><svg class="ti"><use href="#insert"/></svg>Insert</a>
        <a class="tab"><svg class="ti"><use href="#export"/></svg>Export</a>
        <a class="tab"><svg class="ti"><use href="#import"/></svg>Import</a>
        <a class="tab"><svg class="ti"><use href="#priv"/></svg>Privileges</a>
        <a class="tab"><svg class="ti"><use href="#oper"/></svg>Operations</a>
        <a class="tab"><svg class="ti"><use href="#eye"/></svg>Tracking</a>
        <a class="tab"><svg class="ti tri"><use href="#tri"/></svg>More</a>
      </nav>
      <div class="page">
        <div class="subtabs">
          <a class="sub1"><svg class="ti"><use href="#struct"/></svg>Table structure</a>
          <a class="sub2"><svg class="ti rel"><use href="#relv"/></svg>Relation view</a>
        </div>
        <table class="st">
          <colgroup><col class="c1"><col class="c2"><col class="c3"><col class="c4"><col class="c5"><col class="c6"><col class="c7"><col class="c8"><col class="c9"><col class="c10"><col class="c11"></colgroup>
          <thead><tr><th></th><th>#</th><th>Name</th><th>Type</th><th>Collation</th><th>Attributes</th><th>Null</th><th>Default</th><th>Comments</th><th>Extra</th><th class="act">Action</th></tr></thead>
          <tbody>
            <tr><td class="cb"><input type="checkbox"></td><td class="num">1</td><td class="nm">Order_ID<svg class="ickey"><use href="#key"/></svg></td><td>int(15)</td><td></td><td></td><td>No</td><td class="none">None</td><td></td><td></td><td><div class="acts"><a class="lnk"><svg class="ic"><use href="#pencil"/></svg>Change</a><a class="lnk"><svg class="ic"><use href="#drop"/></svg>Drop</a><a class="lnk mr"><svg class="ic sm"><use href="#tri"/></svg>More</a></div></td></tr>
            <tr class="ev"><td class="cb"><input type="checkbox"></td><td class="num">2</td><td class="nm">Emp_ID</td><td>int(15)</td><td></td><td></td><td>No</td><td class="none">None</td><td></td><td></td><td><div class="acts"><a class="lnk"><svg class="ic"><use href="#pencil"/></svg>Change</a><a class="lnk"><svg class="ic"><use href="#drop"/></svg>Drop</a><a class="lnk mr"><svg class="ic sm"><use href="#tri"/></svg>More</a></div></td></tr>
            <tr><td class="cb"><input type="checkbox"></td><td class="num">3</td><td class="nm">Cust_ID</td><td>int(15)</td><td></td><td></td><td>No</td><td class="none">None</td><td></td><td></td><td><div class="acts"><a class="lnk"><svg class="ic"><use href="#pencil"/></svg>Change</a><a class="lnk"><svg class="ic"><use href="#drop"/></svg>Drop</a><a class="lnk mr"><svg class="ic sm"><use href="#tri"/></svg>More</a></div></td></tr>
            <tr class="ev"><td class="cb"><input type="checkbox"></td><td class="num">4</td><td class="nm">Order_Date</td><td>date</td><td></td><td></td><td>No</td><td class="none">None</td><td></td><td></td><td><div class="acts"><a class="lnk"><svg class="ic"><use href="#pencil"/></svg>Change</a><a class="lnk"><svg class="ic"><use href="#drop"/></svg>Drop</a><a class="lnk mr"><svg class="ic sm"><use href="#tri"/></svg>More</a></div></td></tr>
            <tr><td class="cb"><input type="checkbox"></td><td class="num">5</td><td class="nm">Order_Comment</td><td>text</td><td>utf8_general_ci</td><td></td><td>No</td><td class="none">None</td><td></td><td></td><td><div class="acts"><a class="lnk"><svg class="ic"><use href="#pencil"/></svg>Change</a><a class="lnk"><svg class="ic"><use href="#drop"/></svg>Drop</a><a class="lnk mr"><svg class="ic sm"><use href="#tri"/></svg>More</a></div></td></tr>
          </tbody>
        </table>
        <div class="bulk1">
          <svg class="selarr"><use href="#selarrow"/></svg>
          <input type="checkbox" class="chk">
          <a class="lk">Check all</a>
          <em class="ws">With selected:</em>
          <a class="lnk"><svg class="ic"><use href="#tbl"/></svg>Browse</a>
          <a class="lnk"><svg class="ic"><use href="#pencil"/></svg>Change</a>
          <a class="lnk"><svg class="ic"><use href="#drop"/></svg>Drop</a>
          <a class="lnk"><svg class="ic"><use href="#key"/></svg>Primary</a>
          <a class="lnk"><svg class="ic"><use href="#uniq"/></svg>Unique</a>
          <a class="lnk"><svg class="ic"><use href="#idx"/></svg>Index</a>
          <a class="lnk"><svg class="ic"><use href="#spat"/></svg>Spatial</a>
          <a class="lnk"><svg class="ic"><use href="#full"/></svg>Fulltext</a>
        </div>
        <div class="bulk2">
          <a class="lnk tight"><svg class="ic"><use href="#cadd"/></svg>Add to central columns</a>
          <a class="lnk"><svg class="ic"><use href="#crem"/></svg>Remove from central columns</a>
        </div>
        <hr class="rule">
        <div class="tools2">
          <a class="lnk"><svg class="ic"><use href="#print"/></svg>Print</a>
          <a class="lnk"><svg class="ic"><use href="#prop"/></svg>Propose table structure<svg class="ic hp"><use href="#help"/></svg></a>
          <a class="lnk"><svg class="ic"><use href="#eye"/></svg>Track table</a>
          <a class="lnk"><svg class="ic"><use href="#move"/></svg>Move columns</a>
          <a class="lnk"><svg class="ic"><use href="#wand"/></svg>Normalize</a>
        </div>
        <form class="addrow">
          <svg class="ic"><use href="#insert"/></svg>
          <span class="addl">Add</span>
          <input class="num1" type="text" value="1">
          <span class="addc">column(s)</span>
          <select class="sel"><option>after Order_Comment</option></select>
          <button type="button" class="go">Go</button>
        </form>
        <section class="fs">
          <div class="legend">Indexes<svg class="ic lh"><use href="#help"/></svg></div>
          <table class="ix">
            <colgroup><col class="x1"><col class="x2"><col class="x3"><col class="x4"><col class="x5"><col class="x6"><col class="x7"><col class="x8"><col class="x9"><col class="x10"></colgroup>
            <thead><tr><th>Action</th><th>Keyname</th><th>Type</th><th>Unique</th><th>Packed</th><th>Column</th><th>Cardinality</th><th>Collation</th><th>Null</th><th>Comment</th></tr></thead>
            <tbody><tr>
              <td class="ixa"><div class="acts2"><a class="lnk"><svg class="ic"><use href="#pencil"/></svg>Edit</a><a class="lnk"><svg class="ic ren"><use href="#rename"/></svg>Rename</a><a class="lnk"><svg class="ic"><use href="#drop"/></svg>Drop</a></div></td>
              <td class="nm">PRIMARY</td><td>BTREE</td><td>Yes</td><td>No</td><td>Order_ID</td><td>0</td><td>A</td><td>No</td><td></td>
            </tr></tbody>
          </table>
        </section>
        <div class="foot"><span class="fin"></span><span class="fbtn"></span></div>
      </div>
      <div class="consolebar">
        <svg class="cic"><use href="#console"/></svg><span>Console</span>
        <span class="cright2"><span>Bookmarks</span><span>Options</span><span>History</span><span>Clear</span></span>
      </div>
      <div class="strip"></div>
    </main>
    <div class="vs"><span class="arr up"></span><span class="vthumb"></span><span class="arr down"></span></div>
  </div>
</div>

<footer class="taskbar">
  <div class="tk"><svg class="t16"><use href="#win"/></svg></div>
  <div class="tk"><svg class="t16"><use href="#mag"/></svg></div>
  <div class="tk"><svg class="t16"><use href="#tv"/></svg></div>
  <div class="tk"><svg class="t22"><use href="#cmd"/></svg></div>
  <div class="tk"><svg class="t24"><use href="#snip"/></svg></div>
  <div class="tk run"><svg class="t24"><use href="#folder"/></svg></div>
  <div class="tk"><svg class="t24"><use href="#sticky"/></svg></div>
  <div class="tk"><svg class="t24"><use href="#calc"/></svg></div>
  <div class="tk"><svg class="t24"><use href="#teams"/></svg></div>
  <div class="tk"><svg class="t24"><use href="#ff"/></svg></div>
  <div class="tk run"><svg class="t24"><use href="#vsc"/></svg></div>
  <div class="tk run act2"><svg class="t24"><use href="#chr"/></svg></div>
  <div class="tk run"><svg class="t24"><use href="#xam"/></svg></div>
  <div class="tk run"><svg class="t24"><use href="#note"/></svg></div>
  <div class="tk run"><svg class="t24"><use href="#word"/></svg></div>
  <div class="tray">
    <svg class="tnews"><use href="#news"/></svg>
    <svg viewBox="0 0 12 8" class="tcar"><path d="M1 7l5-5.500L11 7" fill="none" stroke="#222"/></svg>
    <svg class="tcl"><use href="#cloud"/></svg>
    <svg class="tnet"><use href="#net"/></svg>
    <svg class="tsn"><use href="#snd"/></svg>
    <span class="eng">ENG</span>
    <span class="clock"><span>7:27 am</span><span>04/05/2022</span></span>
    <svg class="tbub"><use href="#bubble"/></svg>
  </div>
</footer>
</body>
</html>
```
FILE: styles.css
```css
*{box-sizing:border-box}
html,body{margin:0;padding:0}
body{width:1920px;height:1080px;overflow:hidden;display:flex;flex-direction:column;font-family:"Liberation Sans",Arial,sans-serif;font-size:19.8px;color:#444;background:#fff}
.sprite{position:absolute;width:0;height:0;overflow:hidden}
.svgt{font:bold 13px "Liberation Sans",sans-serif;fill:#111}
.svgs{font:bold 11px "Liberation Sans",sans-serif;fill:#b324a8}
.svgw{font:bold 11px "Liberation Sans",sans-serif;fill:#fff}
.svgp{font:italic bold 6.5px "Liberation Sans",sans-serif;fill:#4a5a8c}
.svgd{font:bold 7px "Liberation Sans",sans-serif;fill:#555}
.svgr{font:bold 7px "Liberation Sans",sans-serif;fill:#c05a7a}
.svgb{font:bold 17px "Liberation Sans",sans-serif;fill:#1f5cb5}

.tabstrip{height:34px;flex:none;background:#dee1e6;display:grid;grid-template-columns:214px 207px 204px 205px 205px 207px 204px 205px 60px 1fr;font:12px Roboto,sans-serif;color:#3c4043}
.ctab{position:relative;display:flex;align-items:center;gap:8px;padding:0 9px 0 11px;min-width:0}
.ctab.first{padding-left:20px}
.ctab.sep::after{content:"";position:absolute;right:0;top:8px;height:19px;width:1px;background:#9aa0a6}
.ctab.active{background:#fff;border-radius:9px 9px 0 0}
.fav{width:16px;height:17px;flex:none}
.tlabel{flex:1;min-width:0;white-space:nowrap;-webkit-mask-image:linear-gradient(90deg,#000 88%,transparent);mask-image:linear-gradient(90deg,#000 88%,transparent)}
.close{width:12px;height:12px;flex:none}
.newtab{display:flex;align-items:center;padding-left:16px}
.plusnew{width:12px;height:12px}
.winctl{display:grid;grid-template-columns:46px 46px 46px 20px;align-items:center;padding-left:43px}
.wc{width:12px;height:12px}

.toolbar{height:36px;flex:none;background:#fff;display:flex;align-items:center;padding:0 0 0 14px}
.nav{width:16px;height:16px;margin-right:16px;flex:none}
.omni{width:1672px;height:28px;flex:none;margin-left:-2px;background:#f1f3f4;border-radius:14px;display:flex;align-items:center;padding:0 7px 0 12px}
.info{width:14px;height:14px;flex:none;margin-right:8px}
.url{font:14.1px Roboto,sans-serif;color:#5f6368;white-space:nowrap}
.host{color:#202124}
.omni-right{margin-left:auto;display:flex;gap:16px}
.tb{width:16px;height:16px;flex:none}
.tools{display:flex;align-items:center;margin-left:17.5px;gap:16px}
.avatar{width:22px;height:22px;margin-left:-3px;border-radius:50%;background:#6e8a9c;color:#fff;font:12px Roboto,sans-serif;display:flex;align-items:center;justify-content:center}
.kebab{width:4px;height:16px;margin-left:3px}

.bookmarks{height:33px;flex:none;background:#fff;border-bottom:1px solid #dcdcdc;display:grid;align-items:center;padding:0 0 4px 13px;grid-template-columns:34px 31px 35px 30px 79px 71px 84px 96px 115px 89px 151px 73px 107px 148px 148px 124px 154px 151px 159px 20px;font:11.6px Roboto,sans-serif;color:#3c4043}
.bm{display:flex;align-items:center;gap:7px;white-space:nowrap;min-width:0}
.bi{width:16px;height:16px;flex:none}
.more{font-size:15px;color:#5f6368}

.app{height:937px;flex:none;display:flex;min-height:0}
.side{width:326px;flex:none;display:flex;flex-direction:column;background:linear-gradient(90deg,#f3f3f3 0,#f3f3f3 280px,#e2e2e2 326px);overflow:hidden}
.splitter{width:4px;flex:none;background:#bbb}
.logo{height:57px;flex:none;padding:1px 0 0 40px;font:italic bold 39px/48px "Liberation Sans",sans-serif;white-space:nowrap}
.lphp{color:#6c78af}
.lmy{color:#f89c0e}
.navicons{height:40px;flex:none;padding:0 0 7px 76px;display:flex;align-items:center;gap:4.5px}
.ni{width:25px;height:25px;flex:none}
.recents{display:flex;gap:4px;padding-left:15px;flex:none}
.rbtn{height:37px;padding:0 6px;border:1px solid #ddd;border-radius:6px;background:#f3f3f3;font:19.6px "Liberation Sans",sans-serif;color:#444}
.linkrow{height:35px;flex:none;display:flex;justify-content:flex-end;align-items:center;padding:5px 36px 0 0}
.linkic{width:22px;height:12px}

.treewrap{flex:1;min-height:0;display:flex}
.tree{list-style:none;margin:0;padding:1px 0 0;flex:1;min-width:0;position:relative;color:#000}
.tree::before{content:"";position:absolute;left:22px;top:18px;height:724px;width:1px;background:#777}
.subtree{list-style:none;margin:0;padding:0;position:relative}
.subtree::before{content:"";position:absolute;left:53px;top:-17px;height:189px;width:1px;background:#777}
.row{position:relative;height:34.48px;display:flex;align-items:center;padding-left:14px;white-space:nowrap}
.row::before{content:"";position:absolute;left:22px;top:50%;width:22px;height:1px;background:#777}
.row.l2{padding-left:45px}
.row.l2::before{left:53px;width:20px}
.row.cur{margin-left:39px;padding-left:6px;background:#dcdcdc}
.row.cur::before{left:14px}
.exp,.noexp{width:20px;height:20px;margin-right:10px;flex:none;position:relative}
.row.l2 .exp,.row.l2 .noexp{margin-right:7px}
.exp{background:#ccc;border:1px solid #b8b8b8;border-radius:5px;box-shadow:0 0 0 1px #ddd}
.exp svg{display:block;width:18px;height:18px}
.dbic{width:23px;height:23px;flex:none;margin:0 8px 0 -3px;position:relative}
.tbic{width:24px;height:24px;flex:none;margin-right:8px;position:relative}
.row span:last-child{position:relative}
.sscroll{width:15px;flex:none;margin-right:2px;background:#f5f5f5;display:flex;flex-direction:column;align-items:center}
.arr{width:0;height:0;border-left:4px solid transparent;border-right:4px solid transparent;flex:none}
.arr.up{border-bottom:5px solid #888;margin:6px 0}
.arr.down{border-top:5px solid #555;margin:6px 0}
.sthumb{width:13px;height:716px;background:#c1c1c1;flex:none}
.sscroll .arr.down{margin-top:21px}

.mainwrap{flex:1;display:flex;min-width:0}
.mainin{width:1574px;flex:none;display:flex;flex-direction:column;min-height:0}
.vs{width:16px;flex:none;background:#f5f5f5;display:flex;flex-direction:column;align-items:center}
.vthumb{width:14px;height:517px;background:#c1c1c1;flex:none}
.vs .arr.up{margin:5px 0 6px}
.vs .arr.down{margin-top:auto;margin-bottom:5px}

.crumbs{height:34px;flex:none;background:#888;color:#fff;display:flex;align-items:center;padding-bottom:2px;font-size:19.7px;white-space:nowrap}
.back{width:25px;height:31px;margin-bottom:-1px;background:#f0f0f0;color:#333;display:flex;align-items:center;justify-content:center;font-size:18px;margin-right:18px}
.ci{width:24px;height:24px;flex:none}
.ci2{margin:0 0 0 -3px}
.ci3{margin:0}
.raq{margin:0 14px 0 12px}
.cright{margin-left:auto;display:flex;align-items:center;gap:16px;padding-right:28px}
.cgear{width:22px;height:22px}
.ccol{width:18px;height:16px}

.tabs{height:55px;flex:none;display:grid;grid-template-columns:142px 160px 112px 138px 126px 135px 134px 165px 176px 152px 114px 1fr;background:linear-gradient(#fafafa,#dedede);border-bottom:1px solid #ccc}
.tab{display:flex;align-items:center;gap:16px;padding:0 0 2px 19px;font-weight:bold;font-size:19.5px;color:#235a81;border-right:1px solid #fff;white-space:nowrap}
.tab.on{background:#fff;border-left:1px solid #ccc;border-right:1px solid #ccc;margin-bottom:-1px;padding-left:18px;height:55px}
.ti{width:24px;height:24px;flex:none}
.ti.tri{width:19px;height:19px;margin-right:-2px}

.page{flex:1;min-height:0;overflow:hidden;padding:0 11px 0 5px;background:#fff}
.subtabs{display:flex;gap:9px;margin:12px 0 13px 12px;height:45px;font-size:19.45px}
.sub1,.sub2{display:flex;align-items:center;font-weight:bold;color:#235a81;border:1px solid #ddd;white-space:nowrap}
.sub1{width:219px;padding-left:22px;gap:17px;border-radius:6px;background:#fff}
.sub2{width:204px;padding-left:23px;gap:16px;border-radius:22px;background:#f2f2f2}
.sub2 .rel{width:22px;height:22px}

table{border-collapse:separate;border-spacing:0;table-layout:fixed}
.st{width:1172px}
.c1{width:50px}.c2{width:24px}.c3{width:167px}.c4{width:68px}.c5{width:146px}.c6{width:106px}.c7{width:51px}.c8{width:79px}.c9{width:116px}.c10{width:62px}.c11{width:303px}
th{height:32px;padding:0 0 2px 6px;text-align:left;font-weight:bold;color:#000;background:linear-gradient(#fff,#ccc);border-right:2px solid #fff;text-shadow:0 1px 0 #fff;white-space:nowrap;overflow:hidden}
.st th:last-child{border-right:0}
.st th.act{padding-left:7px}
.st td{height:47.9px;padding:0 0 0 6px;background:#fff;white-space:nowrap}
.st tr.ev td{background:#ddd}
.st td.cb{padding:0 0 0 15px}
.cb input,.chk{width:18px;height:18px;margin:0;display:block}
.st td.num{padding-left:6px}
.st td.nm{padding-left:5px}
.nm{font-weight:bold}
.none{font-style:italic}
.ickey{width:24px;height:24px;vertical-align:middle;margin-left:9px}
.acts{display:grid;grid-template-columns:117px 91px auto;padding-left:4px}
.lnk{display:flex;align-items:center;gap:5px;color:#235a81;white-space:nowrap}
.acts .lnk:first-child{gap:6px}
.lnk.tight{gap:3px}
.ic{width:24px;height:24px;flex:none}
.ic.sm{width:18px;height:18px;margin-right:5px}
.bulk1{display:grid;grid-template-columns:70px 34px 126px 154px 141px 147px 118px 145px 140px 125px 137px auto;align-items:center;height:36px;margin:26px 0 0 19px}
.selarr{width:42px;height:24px;display:block}
.lk{color:#235a81}
.ws{color:#444}
.bulk2{display:flex;gap:46px;height:36px;align-items:center;margin:7px 0 0 25px}
.rule{height:2px;border:0;background:#444;margin:28px 0 0}
.tools2{display:flex;height:36px;align-items:center;margin:20px 0 0 5px}
.tools2 .lnk:nth-child(1){margin-right:29px}
.tools2 .lnk:nth-child(2){margin-right:34px}
.tools2 .lnk:nth-child(3){margin-right:31px}
.tools2 .lnk:nth-child(4){margin-right:32px}
.ic.hp{margin-left:4px}
.addrow{display:flex;align-items:center;height:46px;margin:6px 0 0 5px}
.addl{margin:0 16px 0 11px}
.num1{width:256px;height:45px;border:1px solid #aaa;border-radius:2px;padding:0 7px;font:19.8px "Liberation Sans",sans-serif;color:#444}
.addc{margin:0 25px 0 15px}
.sel{width:236px;height:37px;border:1px solid #aaa;border-radius:2px;background:#fff;padding-left:6px;font:19.8px "Liberation Sans",sans-serif;color:#444}
.go{width:67px;height:43px;margin-left:15px;border:1px solid #aaa;border-radius:18px;background:linear-gradient(#fff,#ddd);font:bold 19.8px "Liberation Sans",sans-serif;color:#111;text-shadow:0 1px 0 #fff;box-shadow:0 1px 2px #bbb}
.fs{margin-top:50px;height:148px;border:1px solid #aaa;border-radius:6px 0 0 0;background:#eee;padding:0 11px}
.legend{width:141px;height:47px;margin-top:-23px;background:#fff;border:1px solid #aaa;border-radius:3px;box-shadow:2px 3px 10px rgba(0,0,0,.18);display:flex;align-items:center;font-weight:bold;padding-left:15px;position:relative}
.ic.lh{margin-left:10px}
.ix{width:1094px;margin-top:23px}
.x1{width:293px}.x2{width:102px}.x3{width:77px}.x4{width:80px}.x5{width:82px}.x6{width:93px}.x7{width:116px}.x8{width:98px}.x9{width:50px}.x10{width:103px}
.ix th{height:33px;padding:0 0 0 5px}
.ix td{height:34px;padding:0 0 2px 5px;background:#fff;white-space:nowrap}
.ix td.ixa{padding-left:12px}
.acts2{display:grid;grid-template-columns:82px 121px auto}
.ic.ren{width:22px;height:22px}
.foot{height:50px;background:#d3dce3;border:1px solid #aaa;border-top:0;box-shadow:inset 0 3px 3px #e4e9ee;display:flex;padding:20px 0 0 194px}
.fin{width:258px;height:30px;background:#fff;border:1px solid #aaa;border-radius:3px}
.fbtn{width:42px;height:30px;margin-left:108px;background:#fff;border:1px solid #aaa;border-radius:8px}

.consolebar{height:33px;flex:none;background:#ccc;border-top:1px solid #aaa;border-bottom:1px solid #aaa;display:flex;align-items:center;padding:1px 14px 0 11px;color:#444;position:relative}
.cic{width:22px;height:22px;margin-right:7px}
.cright2{margin-left:auto;display:flex;gap:16px}
.strip{height:9px;flex:none;background:#fff}

.taskbar{height:40px;flex:none;display:flex;background:linear-gradient(90deg,#f1f2f1 0,#e3ece8 24%,#e4ecea 36%,#eee3ef 55%,#f0e6ea 62%,#efe9d7 68%,#ece9d6 75%,#e0efe3 84%,#e0efe8 100%)}
.tk{width:49px;flex:none;display:flex;align-items:center;justify-content:center;position:relative}
.tk:nth-child(2) svg{margin-right:3px}
.tk:nth-child(3) svg{margin-right:6px}
.tk.run::after{content:"";position:absolute;left:4px;right:4px;bottom:0;height:2px;background:#e81123}
.tk.act2{background:rgba(255,255,255,.45)}
.tk.act2::after{left:0;right:0}
.t16{width:16px;height:16px}
.t22{width:22px;height:20px}
.t24{width:24px;height:26px}
.tray{margin-left:auto;display:flex;align-items:center;padding-right:23px;font:11.5px Roboto,sans-serif;color:#222}
.tnews{width:25px;height:24px;margin-right:19px}
.tcar{width:11px;height:8px;margin-right:11px}
.tcl{width:16px;height:14px;margin-right:9px}
.tnet{width:16px;height:16px;margin-right:8px}
.tsn{width:15px;height:16px;margin-right:10px}
.eng{margin-right:12px}
.clock{display:flex;flex-direction:column;align-items:center;gap:4px;margin-right:16px;line-height:14px}
.tbub{width:18px;height:20px}
```
